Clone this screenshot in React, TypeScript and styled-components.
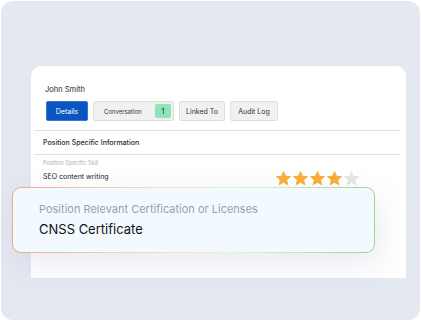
import styled, { createGlobalStyle } from "styled-components";

const Global = createGlobalStyle`
  body {
    margin: 0;
    background: #ffffff;
    font-family: Inter, "Noto Sans", sans-serif;
  }
`;

const Frame = styled.div`
  position: relative;
  box-sizing: border-box;
  margin: 1px;
  width: 419px;
  height: 319px;
  border-radius: 12px;
  background: #e4e8f1;
  padding: 65px 14px 0 30px;
`;

const Card = styled.div`
  box-sizing: border-box;
  width: 375px;
  height: 212px;
  background: #ffffff;
  border-radius: 10px 10px 0 0;
  padding: 19px 5px 0 3px;
`;

const Name = styled.div`
  font-size: 7.5px;
  color: #222;
  line-height: 10px;
  padding-left: 11px;
`;

const Tabs = styled.div`
  display: flex;
  gap: 5px;
  margin-top: 6px;
  padding-left: 12px;
`;

const Tab = styled.div<{ $active?: boolean; $w: number }>`
  box-sizing: border-box;
  width: ${(p) => p.$w}px;
  height: 20px;
  border-radius: 2px;
  display: flex;
  align-items: center;
  justify-content: center;
  gap: 8px;
  font-size: 7px;
  background: ${(p) => (p.$active ? "#0956c2" : "#f1f1f1")};
  color: ${(p) => (p.$active ? "#ffffff" : "#333")};
  border: 1px solid ${(p) => (p.$active ? "#3a78d0" : "#dedede")};
`;

const TabLabel = styled.span<{ $small?: boolean }>`
  font-size: ${(p) => (p.$small ? "6px" : "7px")};
  flex: 1;
  padding-left: 10px;
`;

const Badge = styled.span`
  width: 16px;
  height: 14px;
  border-radius: 2px;
  background: #8ee6b8;
  color: #1d3a2a;
  font-size: 8px;
  display: flex;
  align-items: center;
  justify-content: center;
  margin-right: 2px;
`;

const Divider = styled.div<{ $top?: number }>`
  height: 1px;
  background: #e2e2e2;
  margin-top: ${(p) => p.$top ?? 0}px;
`;

const SectionTitle = styled.div`
  font-size: 7px;
  font-weight: 500;
  color: #2a2a2a;
  padding: 7px 0 7px 9px;
  line-height: 9px;
`;

const SkillRow = styled.div`
  display: flex;
  justify-content: space-between;
  align-items: flex-end;
  padding: 4px 41px 0 9px;
`;

const SkillLabel = styled.div`
  font-size: 5.5px;
  color: #b3b3b3;
  line-height: 8px;
`;

const SkillValue = styled.div`
  font-size: 7px;
  color: #222;
  margin-top: 5px;
  line-height: 9px;
`;

const Stars = styled.div`
  display: flex;
  gap: 0;
  margin-bottom: -6px;
`;

const Overlay = styled.div`
  position: absolute;
  left: 11px;
  top: 186px;
  width: 363px;
  height: 66px;
  box-sizing: border-box;
  padding: 1px;
  border-radius: 9px;
  background: linear-gradient(90deg, #f2a789 0%, #f3d6a8 30%, #e8f7c4 60%, #9ad58a 100%);
  box-shadow: 4px 10px 30px rgba(110, 120, 170, 0.15);
`;

const OverlayInner = styled.div`
  box-sizing: border-box;
  height: 100%;
  border-radius: 8px;
  background: #f3faff;
  padding: 14px 0 0 26px;
`;

const OverlayLabel = styled.div`
  font-size: 11px;
  color: #9d9fa3;
  line-height: 14px;
`;

const OverlayValue = styled.div`
  font-size: 13px;
  color: #111;
  line-height: 16px;
  margin-top: 5px;
`;

function Star({ on }: { on: boolean }) {
  return (
    <svg width="17" height="17" viewBox="0 0 24 24">
      <path
        d="M12 1l3.3 7.1 7.7.8-5.8 5.2 1.7 7.7L12 17.9l-6.9 3.9 1.7-7.7L1 8.9l7.7-.8z"
        fill={on ? "#fdae35" : "#e6e6e6"}
      />
    </svg>
  );
}

export default function App() {
  return (
    <>
      <Global />
      <Frame>
        <Card>
          <Name>John Smith</Name>
          <Tabs>
            <Tab $active $w={42}>Details</Tab>
            <Tab $w={81}>
              <TabLabel $small>Conversation</TabLabel>
              <Badge>1</Badge>
            </Tab>
            <Tab $w={46}>Linked To</Tab>
            <Tab $w={48}>Audit Log</Tab>
          </Tabs>
          <Divider $top={9} />
          <SectionTitle>Position Specific Information</SectionTitle>
          <Divider />
          <SkillRow>
            <div>
              <SkillLabel>Position Specific Skill</SkillLabel>
              <SkillValue>SEO content writing</SkillValue>
            </div>
            <Stars>
              {[1, 2, 3, 4, 5].map((i) => (
                <Star key={i} on={i <= 4} />
              ))}
            </Stars>
          </SkillRow>
        </Card>
        <Overlay>
          <OverlayInner>
            <OverlayLabel>Position Relevant Certification or Licenses</OverlayLabel>
            <OverlayValue>CNSS Certificate</OverlayValue>
          </OverlayInner>
        </Overlay>
      </Frame>
    </>
  );
}
